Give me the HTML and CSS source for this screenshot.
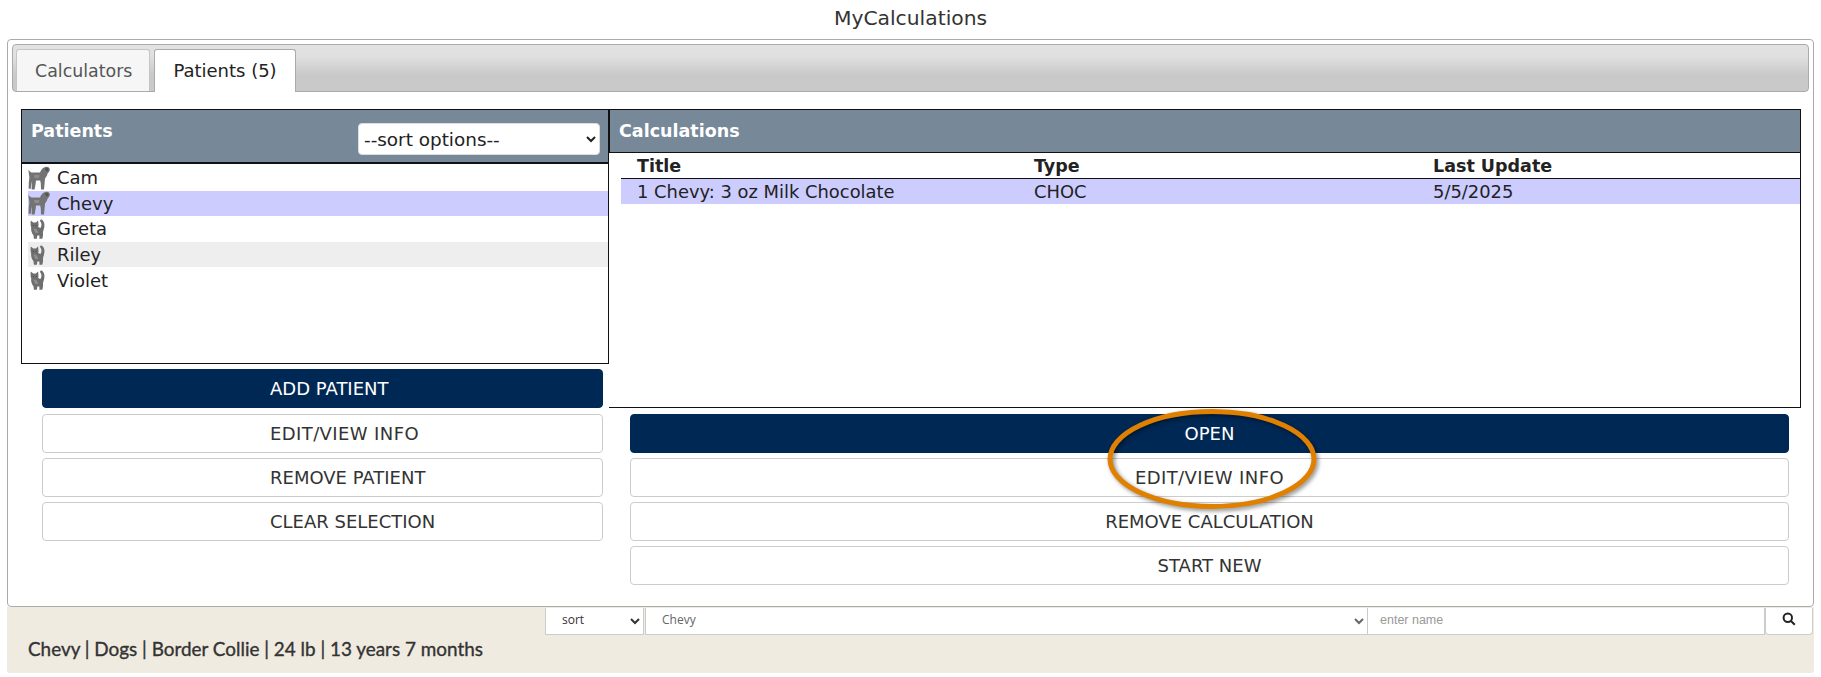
FILE: index.html
```html
<!DOCTYPE html>
<html lang="en">
<head>
<meta charset="utf-8">
<title>MyCalculations</title>
<link rel="stylesheet" href="styles.css">
</head>
<body>
<h1 class="title">MyCalculations</h1>
<main class="panel">
  <nav class="tabbar">
    <a class="tab">Calculators</a>
    <a class="tab tab-active">Patients (5)</a>
  </nav>
  <div class="columns">
    <section class="col-left">
      <div class="box box-patients">
        <header class="head head-patients">
          <span class="head-label">Patients</span>
          <select class="sort-select"><option>--sort options--</option></select>
        </header>
        <ul class="plist">
          <li class="prow"><svg class="pet-dog" viewBox="0 0 22 24"><use href="#dog"/></svg><span>Cam</span></li>
          <li class="prow prow-sel"><svg class="pet-dog" viewBox="0 0 22 24"><use href="#dog"/></svg><span>Chevy</span></li>
          <li class="prow"><svg class="pet-cat" viewBox="0 0 14 19"><use href="#cat"/></svg><span>Greta</span></li>
          <li class="prow prow-hover"><svg class="pet-cat" viewBox="0 0 14 19"><use href="#cat"/></svg><span>Riley</span></li>
          <li class="prow"><svg class="pet-cat" viewBox="0 0 14 19"><use href="#cat"/></svg><span>Violet</span></li>
        </ul>
      </div>
      <div class="btns btns-left">
        <button class="btn btn-left btn-primary">ADD PATIENT</button>
        <button class="btn btn-left btn-wide">EDIT/VIEW INFO</button>
        <button class="btn btn-left">REMOVE PATIENT</button>
        <button class="btn btn-left">CLEAR SELECTION</button>
      </div>
    </section>
    <section class="col-right">
      <div class="box box-calcs">
        <header class="head head-calcs"><span class="head-label">Calculations</span></header>
        <div class="table">
          <div class="trow thead"><span>Title</span><span>Type</span><span>Last Update</span></div>
          <div class="trow tsel"><span>1 Chevy: 3 oz Milk Chocolate</span><span>CHOC</span><span>5/5/2025</span></div>
        </div>
      </div>
      <div class="btns btns-right">
        <button class="btn btn-primary">OPEN</button>
        <button class="btn btn-wide">EDIT/VIEW INFO</button>
        <button class="btn">REMOVE CALCULATION</button>
        <button class="btn">START NEW</button>
      </div>
    </section>
  </div>
</main>
<footer class="foot">
  <div class="foot-controls">
    <select class="fc fc-sort"><option>sort</option></select>
    <select class="fc fc-name"><option>Chevy</option></select>
    <input class="fc fc-input" placeholder="enter name">
    <button class="fc-btn" aria-label="Search"><svg viewBox="0 0 14 14" class="search-ico"><circle cx="5.8" cy="5.8" r="4.2"/><path d="M9 9l3.8 3.8"/></svg></button>
  </div>
  <div class="foot-text">Chevy | Dogs | Border Collie | 24 lb | 13 years 7 months</div>
</footer>
<svg class="oval" viewBox="0 0 210 104"><ellipse cx="104" cy="50" rx="102" ry="47.5"/></svg>
<svg class="defs">
  <defs>
    <symbol id="dog" viewBox="0 0 22 24">
      <path fill="#737373" d="M.4 3.5C1.2 5.5 3 6.6 5 6.6L12 6.6C13 3.8 15 1.4 18 .8 20 .3 22.2 2 21.8 4.2 21.4 5.8 20 6.6 19.6 7.6 19.2 9.6 18 11.4 17 12.6L16.6 17.5 16 23.6 13 23.6 12.8 17.4 12.2 14.6 8 14.6 7.6 18 6.6 23.6 3.6 23.6 3.8 17.4 3.6 15.4 3.2 19 2.8 22.8.6 22.8.8 16.5 1.4 11.5.8 7.6Z"/>
      <path fill="#555" d="M16.6 2.6C18 1.8 20 1.6 20.6 3 21 4.2 19.8 5.2 18.8 5.8 18.2 4.8 17.4 3.8 16.6 2.6Z"/>
      <path fill="#8c8c8c" d="M6 9L11.5 9 11 12 6.5 12Z"/>
    </symbol>
    <symbol id="cat" viewBox="0 0 14 19">
      <path fill="#6f6f6f" d="M.6 1.4L3 3.4 5.4 3.4 7.6 1.4 8 6 7.6 7.6 9.8 8.6C10.8 7 11.2 5 10.2 3.2L9.2 1.6 10.4.2C12.8 1.2 14 4 13.6 7 13.4 9 12.6 11 12.2 12.4L12.2 16 11.6 18.8 8.8 18.8 8.8 15.6 6.8 15.6 6.4 18.8 3.6 18.8 3.2 15.4C1.6 13.4.6 11 1 8 .2 6 .2 3.6.6 1.4Z"/>
      <path fill="#8e8e8e" d="M3 9L6 9.5 8 13 5 13.5Z"/>
      <path fill="#444" d="M2.4 5.4L3.8 6 3 6.8ZM6.4 5.4L5 6 5.8 6.8Z"/>
    </symbol>
  </defs>
</svg>
</body>
</html>
```
FILE: styles.css
```css
* { box-sizing: border-box; }
html, body { margin: 0; padding: 0; }
body {
  position: relative;
  width: 1821px;
  height: 677px;
  overflow: hidden;
  background: #fff;
  font-family: "DejaVu Sans", Verdana, sans-serif;
  color: #222;
  padding: 0 7px 0 7px;
}
.title {
  margin: 0;
  height: 39px;
  font-size: 20.3px;
  font-weight: 400;
  line-height: 36px;
  text-align: center;
  color: #333;
}
.panel {
  height: 568px;
  border: 1px solid #aaa;
  border-radius: 4px;
  padding: 4px;
  background: #fff;
}
.tabbar {
  display: flex;
  align-items: flex-end;
  gap: 4px;
  height: 48px;
  padding: 5px 0 0 3px;
  border: 1px solid #aaa;
  border-radius: 4px;
  background: linear-gradient(#e2e2e2 0%, #e0e0e0 25%, #c9c9c9 65%, #c9c9c9 100%);
}
.tab {
  height: 42px;
  padding: 0 17px 0 18px;
  font-size: 17.4px;
  line-height: 42px;
  color: #555;
  background: #f6f6f6;
  border: 1px solid #c5c5c5;
  border-bottom: 0;
  border-radius: 3px 3px 0 0;
}
.tab-active {
  margin-bottom: -1px;
  height: 43px;
  padding: 0 18px;
  font-size: 18px;
  color: #222;
  background: #fff;
  border-color: #aaa;
}
.columns {
  display: flex;
  margin: 17px 0 0 9px;
}
.col-left { width: 588px; flex: none; }
.col-right { flex: none; width: 1192px; }
.box { border: 1px solid #111; }
.box-patients { height: 255px; }
.box-calcs { height: 299px; border-left: 0; }
.head {
  background: #778899;
  color: #fff;
  font-weight: 700;
  font-size: 17.5px;
}
.head-patients {
  display: flex;
  justify-content: space-between;
  height: 54px;
  padding: 10px 8px 0 9px;
  border-bottom: 2px solid #111;
}
.head-calcs {
  height: 43px;
  padding: 10px 0 0 9px;
  border-bottom: 1px solid #111;
  border-left: 1px solid #111;
}
.head-label { line-height: 22px; }
.sort-select {
  width: 242px;
  height: 32px;
  margin-top: 3px;
  padding: 0 0 0 1px;
  border: 1px solid #ddd;
  border-radius: 4px;
  background: #fff;
  font: 18.4px "DejaVu Sans", Verdana, sans-serif;
  color: #222;
}
.plist {
  list-style: none;
  margin: 0;
  padding: 1px 0 0 6px;
}
.prow {
  display: flex;
  align-items: center;
  height: 25.6px;
  font-size: 18px;
  color: #222;
}
.prow svg { flex: none; }
.pet-dog { width: 22px; height: 24px; margin-right: 7px; }
.pet-cat { width: 15px; height: 20px; margin: 0 12px 0 2px; }
.prow-sel { background: #ccccff; }
.prow-hover { background: #eeeeee; }
.table { padding: 0 0 0 12px; }
.trow {
  display: grid;
  grid-template-columns: 397px 399px 1fr;
  padding-left: 16px;
  font-size: 17.9px;
}
.thead {
  height: 26px;
  font-size: 17.5px;
  font-weight: 700;
  line-height: 27px;
  border-bottom: 1px solid #111;
}
.tsel { height: 25px; line-height: 26px; background: #ccccff; }
.btns { display: flex; flex-direction: column; gap: 5px; }
.btns-left { margin: 5px 0 0 21px; width: 561px; }
.btns-left .btn-primary { margin-bottom: 1px; }
.btns-right { margin: 6px 0 0 21px; width: 1159px; }
.btn {
  height: 39px;
  padding: 0;
  border: 1px solid #ccc;
  border-radius: 4px;
  background: #fff;
  color: #333;
  font: 18px "DejaVu Sans", Verdana, sans-serif;
  text-align: center;
}
.btn-left { padding-left: 227px; text-align: left; }
.btn-wide { letter-spacing: .4px; }
.btn-primary {
  background: #002855;
  border-color: #002855;
  color: #fff;
}
.foot {
  position: relative;
  height: 66px;
  background: #f0ebe0;
  border-radius: 0 0 3px 3px;
}
.foot-controls {
  display: flex;
  height: 28px;
  margin-left: 538px;
  padding-top: 1px;
}
.fc {
  height: 27px;
  border: 1px solid #ccc;
  border-top: 0;
  background: #fff;
  font: 12px "Open Sans", sans-serif;
  padding-bottom: 3px;
}
.fc-sort { width: 99px; padding-left: 12px; color: #333; border-width: 0 1px 1px 1px; }
.fc-name { width: 723px; padding-left: 12px; color: #666; border-width: 0 1px 1px 1px; margin-left: 1px; }
.fc-input { width: 397px; padding-left: 12px; border-width: 0 1px 1px 0; font-family: "Liberation Sans", sans-serif; font-size: 12.5px; }
.fc-input::placeholder { color: #999; }
.fc-btn {
  width: 48px;
  height: 27px;
  padding: 0 0 2px;
  border: 1px solid #ccc;
  border-top: 0;
  border-radius: 0 0 4px 4px;
  background: #fff;
}
.search-ico { width: 14px; height: 14px; fill: none; stroke: #222; stroke-width: 2; }
.foot-text {
  margin: 2px 0 0 21px;
  font: 400 18.9px Lato, sans-serif;
  -webkit-text-stroke: .35px #333;
  color: #333;
}
.oval {
  position: absolute;
  left: 1108px;
  top: 409px;
  width: 210px;
  height: 104px;
  overflow: visible;
  fill: none;
  stroke: #e08000;
  stroke-width: 5;
  filter: drop-shadow(2px 2px 2px rgba(0,0,0,.45));
}
.defs { position: absolute; width: 0; height: 0; }
```
